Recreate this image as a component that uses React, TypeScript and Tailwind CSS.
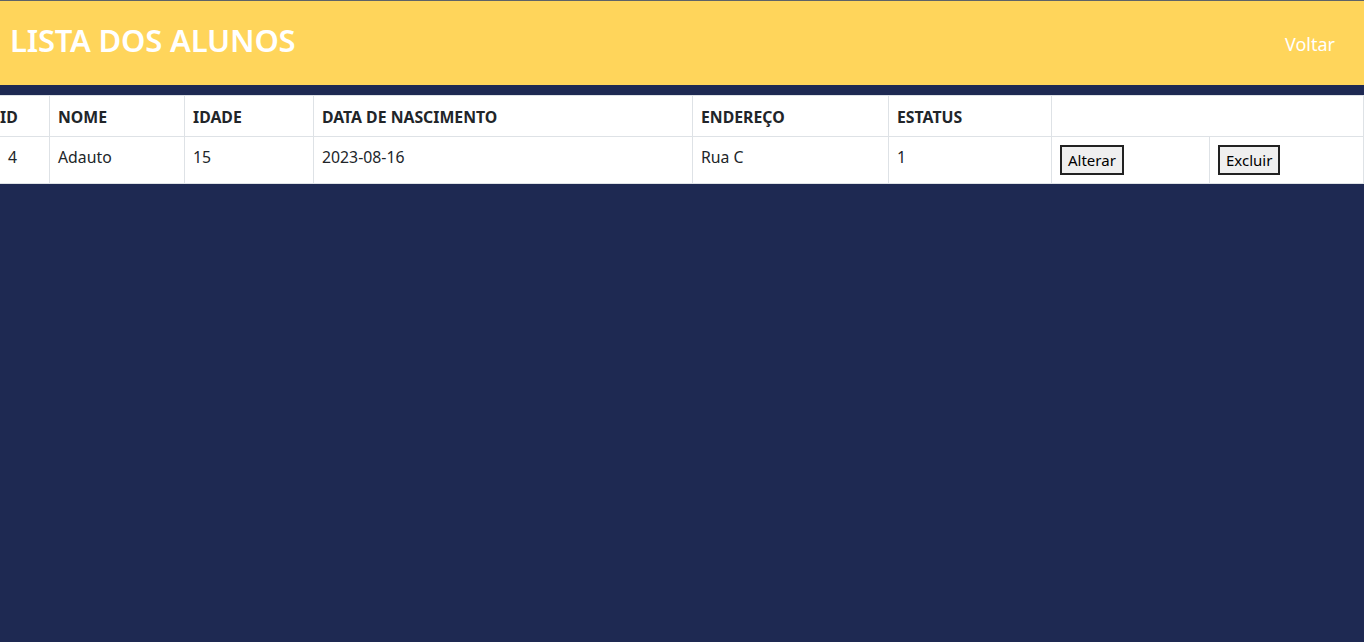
const alunos = [
	{ id: 4, nome: 'Adauto', idade: 15, nascimento: '2023-08-16', endereco: 'Rua C', status: 1 },
];

const cols = ['w-[58px]', 'w-[135px]', 'w-[129px]', 'w-[379px]', 'w-[196px]', 'w-[163px]', 'w-[158px]', 'w-[154px]'];

export default function App() {
	return (
		<div
			className="min-h-[642px] bg-[#1e2952] text-[#212529]"
			style={{ fontFamily: '"Noto Sans", "Open Sans", sans-serif' }}
		>
			<header className="h-[85px] border-t border-[#5f6368] bg-[#ffd55b] flex items-center justify-between pl-[10px] pr-[29px]">
				<h1 className="text-[31px] font-semibold text-white tracking-[-0.2px] pb-[6px]">LISTA DOS ALUNOS</h1>
				<a href="#" className="text-[18px] text-white pt-[2px]">
					Voltar
				</a>
			</header>
			<div className="overflow-hidden pt-[10px]">
				<table className="ml-[-9px] w-[1373px] table-fixed border-collapse bg-white text-[15.8px]">
					<colgroup>
						{cols.map((c, i) => (
							<col key={i} className={c} />
						))}
					</colgroup>
					<thead>
						<tr className="h-[41px] text-left">
							<th className="border border-[#dee2e6] px-[8px] pt-[3px] font-bold">ID</th>
							<th className="border border-[#dee2e6] px-[8px] pt-[3px] font-bold">NOME</th>
							<th className="border border-[#dee2e6] px-[8px] pt-[3px] font-bold">IDADE</th>
							<th className="border border-[#dee2e6] px-[8px] pt-[3px] font-bold">DATA DE NASCIMENTO</th>
							<th className="border border-[#dee2e6] px-[8px] pt-[3px] font-bold">ENDEREÇO</th>
							<th className="border border-[#dee2e6] px-[8px] pt-[3px] font-bold">ESTATUS</th>
							<th colSpan={2} className="border border-[#dee2e6] px-[8px]"></th>
						</tr>
					</thead>
					<tbody>
						{alunos.map((a) => (
							<tr key={a.id} className="h-[47px]">
								<td className="border border-[#dee2e6] px-[8px] pl-[16px] pb-[5px]">{a.id}</td>
								<td className="border border-[#dee2e6] px-[8px] pb-[5px]">{a.nome}</td>
								<td className="border border-[#dee2e6] px-[8px] pb-[5px]">{a.idade}</td>
								<td className="border border-[#dee2e6] px-[8px] pb-[5px]">{a.nascimento}</td>
								<td className="border border-[#dee2e6] px-[8px] pb-[5px]">{a.endereco}</td>
								<td className="border border-[#dee2e6] px-[8px] pb-[5px]">{a.status}</td>
								<td className="border border-[#dee2e6] px-[8px]">
									<button className="h-[30px] px-[6px] border-2 border-[#222] bg-[#efefef] text-black text-[15px]">
										Alterar
									</button>
								</td>
								<td className="border border-[#dee2e6] px-[8px]">
									<button className="h-[30px] px-[6px] border-2 border-[#222] bg-[#efefef] text-black text-[15px]">
										Excluir
									</button>
								</td>
							</tr>
						))}
					</tbody>
				</table>
			</div>
		</div>
	);
}
